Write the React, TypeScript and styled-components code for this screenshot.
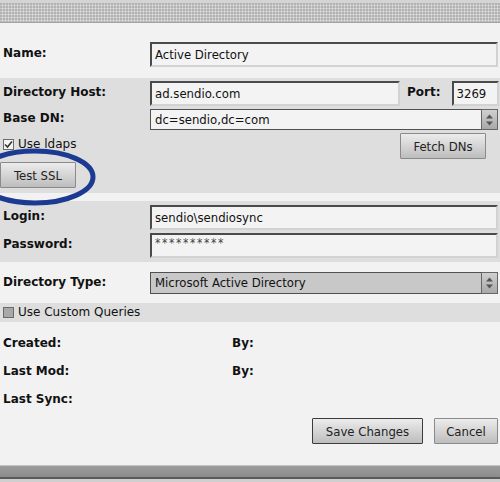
import React from 'react';
import styled, { createGlobalStyle } from 'styled-components';

const GlobalStyle = createGlobalStyle`
  html, body {
    margin: 0;
    padding: 0;
    background: #f2f2f2;
  }
  body {
    font-family: "DejaVu Sans", Verdana, sans-serif;
    color: #111;
  }
`;

const Page = styled.div`
  position: relative;
  width: 500px;
  height: 482px;
  overflow: hidden;
  display: flex;
  flex-direction: column;
  background: #f2f2f2;
`;

const TopBar = styled.div`
  height: 19px;
  border-top: 3px solid #d4d4d4;
  background-color: #b2b2b2;
  background-image: radial-gradient(circle, #e2e2e2 0.9px, transparent 1.1px);
  background-size: 3px 3px;
  background-position: 1px 1px;
  border-bottom: 1px solid #a4a4a4;
`;

const Section = styled.div<{ $shade?: boolean; $pt?: number; $pb?: number }>`
  background: ${p => (p.$shade ? '#dedede' : '#f2f2f2')};
  padding: ${p => p.$pt ?? 0}px 2px ${p => p.$pb ?? 0}px 3px;
  display: flex;
  flex-direction: column;
  gap: 3px;
`;

const Row = styled.div<{ $h?: number }>`
  display: grid;
  grid-template-columns: 147px 1fr;
  align-items: center;
  min-height: ${p => p.$h ?? 25}px;
`;

const Label = styled.div`
  font-weight: bold;
  font-size: 12px;
  line-height: 14px;
  margin-top: -3px;
`;

const Field = styled.div<{ $w?: number }>`
  box-sizing: border-box;
  height: 25px;
  width: ${p => (p.$w ? `${p.$w}px` : '100%')};
  background: #f3f3f3;
  border-top: 2px solid #4a4a4a;
  border-left: 2px solid #4a4a4a;
  border-right: 2px solid #d2d2d2;
  border-bottom: 2px solid #d2d2d2;
  font-family: "DejaVu Sans Condensed", "DejaVu Sans", sans-serif;
  font-size: 13px;
  line-height: 21px;
  padding-left: 3px;
  white-space: nowrap;
  overflow: hidden;
`;

const Masked = styled.span`
  font-size: 12px;
  letter-spacing: 1.6px;
  color: #444;
  position: relative;
  top: -3px;
`;

const HostLine = styled.div`
  display: flex;
  align-items: center;
`;

const PortLabel = styled(Label)`
  margin: -3px 11px 0 7px;
`;

const Select = styled.div<{ $dark?: boolean }>`
  box-sizing: border-box;
  height: ${p => (p.$dark ? 22 : 21)}px;
  display: flex;
  background: ${p => (p.$dark ? '#c8c8c8' : '#f3f3f3')};
  border: 1px solid #505050;
  border-right: none;
  font-family: "DejaVu Sans Condensed", "DejaVu Sans", sans-serif;
  font-size: 13px;
  line-height: 20px;
`;

const SelectText = styled.div`
  flex: 1;
  padding-left: 4px;
  white-space: nowrap;
  overflow: hidden;
`;

const Spinner = styled.div`
  width: 15px;
  background: linear-gradient(#d0d0d0, #a8a8a8);
  border: 1px solid #666;
  margin-top: -1px;
  margin-bottom: -1px;
  display: flex;
  align-items: center;
  justify-content: center;
`;

const Split = styled.div`
  display: flex;
  justify-content: space-between;
  align-items: flex-start;
  padding-right: 12px;
  margin-left: -3px;
`;

const LeftStack = styled.div`
  display: flex;
  flex-direction: column;
  gap: 11px;
  padding-top: 5px;
`;

const CheckRow = styled.label<{ $indent?: number }>`
  display: flex;
  align-items: center;
  gap: 4px;
  padding-left: ${p => p.$indent ?? 0}px;
  font-size: 12px;
  line-height: 13px;
`;

const Box = styled.span<{ $filled?: boolean }>`
  box-sizing: border-box;
  width: 11px;
  height: 11px;
  border: 1px solid #6a6a6a;
  background: ${p => (p.$filled ? '#a8a8a8' : '#f4f4f4')};
  display: inline-flex;
  align-items: center;
  justify-content: center;
`;

const Button = styled.button<{ $w: number; $strong?: boolean }>`
  box-sizing: border-box;
  width: ${p => p.$w}px;
  height: 26px;
  padding: 0;
  font-family: "DejaVu Sans Condensed", "DejaVu Sans", sans-serif;
  font-size: 13px;
  color: #222;
  background: linear-gradient(#ececec, #bdbdbd);
  border: 1px solid ${p => (p.$strong ? '#3c3c3c' : '#8a8a8a')};
  border-radius: 1px;
`;

const Gap = styled.div<{ $h: number }>`
  height: ${p => p.$h}px;
  background: #f2f2f2;
`;

const InfoGrid = styled.div`
  display: grid;
  grid-template-columns: 229px 1fr;
  row-gap: 14px;
  padding: 14px 0 0 3px;
  font-weight: bold;
  font-size: 12px;
  line-height: 14px;
`;

const Actions = styled.div`
  display: flex;
  justify-content: flex-end;
  gap: 11px;
  padding: 12px 2px 0 0;
`;

const Filler = styled.div`
  flex: 1;
  background: #f2f2f2;
`;

const BottomBar = styled.div`
  height: 11px;
  border-top: 1px solid #c4c4c4;
  background: linear-gradient(#9c9c9c, #8c8c8c);
  border-bottom: 2px solid #5a5a5a;
  box-shadow: 0 3px 0 #cfcfcf;
  margin-bottom: 3px;
`;

const Annotation = styled.svg`
  position: absolute;
  left: -30px;
  top: 147px;
  pointer-events: none;
`;

function Arrows() {
  return (
    <svg width="9" height="14" viewBox="0 0 9 14">
      <path d="M4.5 1.5 L8 5.5 H1 Z" fill="#555" />
      <path d="M4.5 12.5 L8 8.5 H1 Z" fill="#555" />
    </svg>
  );
}

function Check() {
  return (
    <svg width="9" height="9" viewBox="0 0 9 9">
      <path d="M1 4.5 L3.5 7 L8 1.5" stroke="#333" strokeWidth="1.6" fill="none" />
    </svg>
  );
}

export default function App() {
  return (
    <>
      <GlobalStyle />
      <Page>
        <TopBar />
        <Section $pt={19} $pb={11}>
          <Row>
            <Label>Name:</Label>
            <Field>Active Directory</Field>
          </Row>
        </Section>
        <Section $shade $pt={3} $pb={5}>
          <Row>
            <Label>Directory Host:</Label>
            <HostLine>
              <Field $w={250}>ad.sendio.com</Field>
              <PortLabel>Port:</PortLabel>
              <Field $w={47}>3269</Field>
            </HostLine>
          </Row>
          <Row $h={21}>
            <Label>Base DN:</Label>
            <Select>
              <SelectText>dc=sendio,dc=com</SelectText>
              <Spinner>
                <Arrows />
              </Spinner>
            </Select>
          </Row>
          <Split>
            <LeftStack>
              <CheckRow $indent={3}>
                <Box>
                  <Check />
                </Box>
                Use ldaps
              </CheckRow>
              <Button $w={76}>Test SSL</Button>
            </LeftStack>
            <Button $w={86}>Fetch DNs</Button>
          </Split>
        </Section>
        <Gap $h={8} />
        <Section $shade $pt={4} $pb={4}>
          <Row>
            <Label>Login:</Label>
            <Field>sendio\sendiosync</Field>
          </Row>
          <Row>
            <Label>Password:</Label>
            <Field>
              <Masked>**********</Masked>
            </Field>
          </Row>
        </Section>
        <Section $pt={10} $pb={9}>
          <Row $h={22}>
            <Label>Directory Type:</Label>
            <Select $dark>
              <SelectText>Microsoft Active Directory</SelectText>
              <Spinner>
                <Arrows />
              </Spinner>
            </Select>
          </Row>
        </Section>
        <Section $shade $pt={3} $pb={3}>
          <CheckRow>
            <Box $filled />
            Use Custom Queries
          </CheckRow>
        </Section>
        <InfoGrid>
          <div>Created:</div>
          <div>By:</div>
          <div>Last Mod:</div>
          <div>By:</div>
          <div>Last Sync:</div>
          <div />
        </InfoGrid>
        <Actions>
          <Button $w={111} $strong>
            Save Changes
          </Button>
          <Button $w={64}>Cancel</Button>
        </Actions>
        <Filler />
        <BottomBar />
        <Annotation width="130" height="60" viewBox="0 0 130 60">
          <ellipse cx="65" cy="30" rx="58" ry="26" fill="none" stroke="#1c3a92" strokeWidth="5" />
        </Annotation>
      </Page>
    </>
  );
}
